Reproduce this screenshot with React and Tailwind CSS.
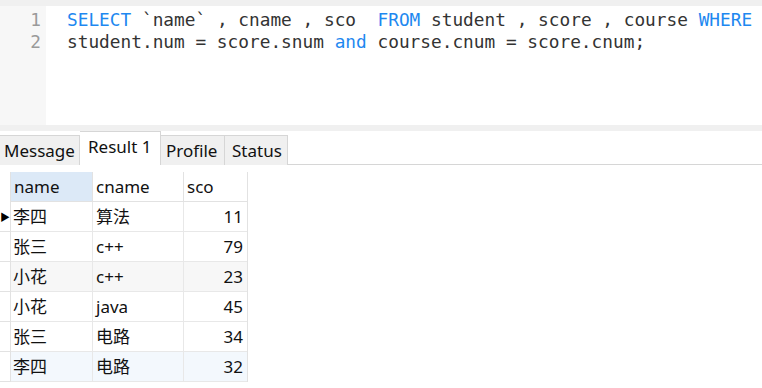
import React from "react";

const rows = [
  ["李四", "算法", "11", "bg-white"],
  ["张三", "c++", "79", "bg-white"],
  ["小花", "c++", "23", "bg-[#f7f7f7]"],
  ["小花", "java", "45", "bg-white"],
  ["张三", "电路", "34", "bg-white"],
  ["李四", "电路", "32", "bg-[#f3f8fd]"],
];

const ui = { fontFamily: '"Noto Sans", "Noto Sans CJK SC", sans-serif' };
const mono = { fontFamily: '"DejaVu Sans Mono", monospace' };

export default function App() {
  return (
    <div className="w-[762px] h-[388px] bg-white overflow-hidden flex flex-col" style={ui}>
      <div className="h-[6px] bg-[#f0f0f0]" />
      <div className="h-[119px] flex">
        <div className="w-[46px] bg-[#f7f7f7] pt-[3px] pr-[5px] text-right text-[17.8px] leading-[22px] text-[#9a9a9a]" style={mono}>
          <div>1</div>
          <div>2</div>
        </div>
        <div className="flex-1 pl-[21px] pt-[3px] text-[17.8px] leading-[22px] text-[#333] whitespace-pre overflow-hidden" style={mono}>
          <div>
            <span className="text-[#1e88f0]">SELECT</span> `name` , cname , sco  <span className="text-[#1e88f0]">FROM</span> student , score , course <span className="text-[#1e88f0]">WHERE</span>
          </div>
          <div>
            student.num = score.snum <span className="text-[#1e88f0]">and</span> course.cnum = score.cnum;
          </div>
        </div>
      </div>
      <div className="h-[6px] bg-[#f0f0f0]" />
      <div className="h-[34px] flex items-end border-b border-[#d6d6d6] text-[17px] text-[#111]">
        <div className="w-[80px] h-[30px] -mb-px bg-[#f0f0f0] border-t border-r border-[#d6d6d6] pl-[4px] flex items-center leading-none">Message</div>
        <div className="w-[81px] h-[34px] -mb-px bg-white border-t border-r border-[#d6d6d6] pl-[8px] pb-[4px] flex items-center leading-none">Result 1</div>
        <div className="w-[64px] h-[30px] -mb-px bg-[#f0f0f0] border-t border-r border-[#d6d6d6] pl-[5px] flex items-center leading-none">Profile</div>
        <div className="w-[63px] h-[30px] -mb-px bg-[#f0f0f0] border-t border-r border-[#d6d6d6] pl-[7px] flex items-center leading-none">Status</div>
      </div>
      <div className="pt-[7px] flex">
        <div className="w-[10px] flex flex-col">
          <div className="h-[30px]" />
          {rows.map((r, i) => (
            <div key={i} className="h-[30px] border-b border-[#e2e2e2] flex items-center">
              {i === 0 && <span className="text-[10px] leading-none text-black">▶</span>}
            </div>
          ))}
        </div>
        <div className="flex flex-col border-l border-r border-[#e2e2e2] text-[17px] text-[#111]">
          <div className="h-[30px] flex border-b border-[#e2e2e2]">
            <div className="w-[82px] bg-[#dce9f7] border-r border-[#e2e2e2] pl-[3px] flex items-center">name</div>
            <div className="w-[91px] border-r border-[#e2e2e2] pl-[3px] flex items-center">cname</div>
            <div className="w-[63px] pl-[3px] flex items-center">sco</div>
          </div>
          {rows.map((r, i) => (
            <div key={i} className={`h-[30px] flex border-b border-[#e8e8e8] ${r[3]}`}>
              <div className="w-[82px] border-r border-[#e8e8e8] pl-[2px] flex items-center">{r[0]}</div>
              <div className="w-[91px] border-r border-[#e8e8e8] pl-[3px] flex items-center">{r[1]}</div>
              <div className="w-[63px] pr-[4px] flex items-center justify-end">{r[2]}</div>
            </div>
          ))}
        </div>
      </div>
    </div>
  );
}
